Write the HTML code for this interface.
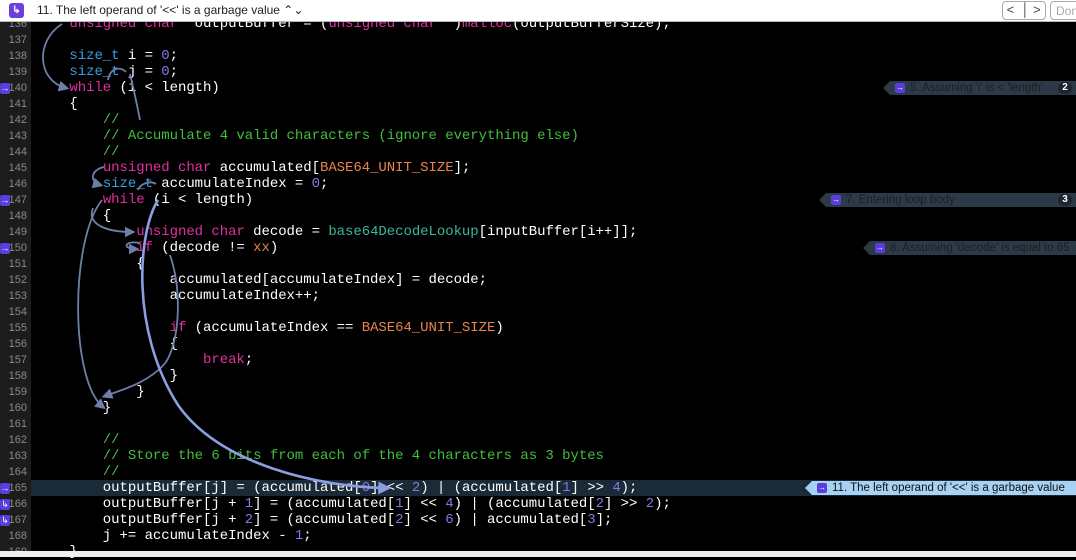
<!DOCTYPE html>
<html><head><meta charset="utf-8"><style>
*{margin:0;padding:0;box-sizing:border-box}
body{width:1076px;height:557px;overflow:hidden;background:#000;position:relative;font-family:"Liberation Sans",sans-serif}
#top{position:absolute;left:0;top:0;width:1076px;height:22px;background:#fff;border-bottom:1px solid #b8b8b8;z-index:5}
#top .ic{position:absolute;left:9px;top:3px;width:15px;height:15px;background:#6b3fd8;border-radius:3px;color:#fff;font-size:10px;line-height:15px;text-align:center;font-weight:bold}
#top .t{position:absolute;left:37px;top:3px;font-size:12px;color:#222}
#top .nav{position:absolute;left:1002px;top:1px;width:44px;height:19px;border:1px solid #aaa;border-radius:4px;font-size:13px;color:#444}
#top .done{position:absolute;left:1050px;top:1px;width:40px;height:19px;border:1px solid #aaa;border-radius:4px;font-size:12px;color:#aaa;padding:2px 0 0 5px}
#gut{position:absolute;left:0;top:22px;width:31px;height:529px;background:#1c1c1c}
#bot{position:absolute;left:0;top:551px;width:1076px;height:6px;background:#efefef;z-index:5}
.ln{position:absolute;left:0;width:27px;text-align:right;font-size:11px;color:#8a8a8a;height:16px;line-height:16px}
.mk{position:absolute;left:0;width:10px;height:11px;background:#5b3ddc;color:#fff;font-size:9px;line-height:11px;text-align:center;border-radius:2px}
.row{position:absolute;left:31px;width:1045px;height:16px}
.c{position:absolute;left:36px;font-family:"Liberation Mono",monospace;font-size:14px;line-height:16px;height:16px;color:#fff;white-space:pre;letter-spacing:-0.05px}
.k{color:#e0309f}.ty{color:#3a9fe0}.n{color:#8b74ea}.m{color:#e8834b}.cm{color:#41bf3c}.f{color:#39b89b}
.bub{position:absolute;height:14px;background:#2c3a47;color:#1a1f25;font-size:11.5px;line-height:14px;padding-left:20px;white-space:nowrap}
.bub:before{content:"";position:absolute;left:-7px;top:0;border-right:7px solid #2c3a47;border-top:7px solid transparent;border-bottom:7px solid transparent}
.bub .a{position:absolute;left:5px;top:2px;width:10px;height:10px;background:#5b3ddc;color:#fff;font-size:8px;line-height:10px;text-align:center;border-radius:2px}
.bub .b{position:absolute;right:4px;top:1px;width:14px;height:12px;background:#1e252c;border-radius:6px;color:#fff;font-weight:bold;text-align:center;line-height:12px;font-size:10px}
.lb{background:#a8d2f4!important;color:#111!important}
.lb:before{border-right-color:#a8d2f4!important}
</style></head><body>
<div id="top"><div class="ic">↳</div><div class="t">11. The left operand of '&lt;&lt;' is a garbage value ⌃⌄</div>
<div class="nav">&nbsp;&lt; &nbsp;│ &gt;</div><div class="done">Don</div></div>
<div id="gut"></div>
<div class="row" style="top:480px;background:#1a2a36"></div>

<div class="c" style="top:16px">    <span class="k">unsigned</span> <span class="k">char</span> *outputBuffer = (<span class="k">unsigned</span> <span class="k">char</span> *)<span class="k">malloc</span>(outputBufferSize);</div>
<div class="c" style="top:48px">    <span class="ty">size_t</span> i = <span class="n">0</span>;</div>
<div class="c" style="top:64px">    <span class="ty">size_t</span> j = <span class="n">0</span>;</div>
<div class="c" style="top:80px">    <span class="k">while</span> (i &lt; length)</div>
<div class="c" style="top:96px">    {</div>
<div class="c cm" style="top:112px">        //</div>
<div class="c cm" style="top:128px">        // Accumulate 4 valid characters (ignore everything else)</div>
<div class="c cm" style="top:144px">        //</div>
<div class="c" style="top:160px">        <span class="k">unsigned</span> <span class="k">char</span> accumulated[<span class="m">BASE64_UNIT_SIZE</span>];</div>
<div class="c" style="top:176px">        <span class="ty">size_t</span> accumulateIndex = <span class="n">0</span>;</div>
<div class="c" style="top:192px">        <span class="k">while</span> (i &lt; length)</div>
<div class="c" style="top:208px">        {</div>
<div class="c" style="top:224px">            <span class="k">unsigned</span> <span class="k">char</span> decode = <span class="f">base64DecodeLookup</span>[inputBuffer[i++]];</div>
<div class="c" style="top:240px">            <span class="k">if</span> (decode != <span class="m">xx</span>)</div>
<div class="c" style="top:256px">            {</div>
<div class="c" style="top:272px">                accumulated[accumulateIndex] = decode;</div>
<div class="c" style="top:288px">                accumulateIndex++;</div>
<div class="c" style="top:320px">                <span class="k">if</span> (accumulateIndex == <span class="m">BASE64_UNIT_SIZE</span>)</div>
<div class="c" style="top:336px">                {</div>
<div class="c" style="top:352px">                    <span class="k">break</span>;</div>
<div class="c" style="top:368px">                }</div>
<div class="c" style="top:384px">            }</div>
<div class="c" style="top:400px">        }</div>
<div class="c cm" style="top:432px">        //</div>
<div class="c cm" style="top:448px">        // Store the 6 bits from each of the 4 characters as 3 bytes</div>
<div class="c cm" style="top:464px">        //</div>
<div class="c" style="top:480px">        outputBuffer[j] = (accumulated[<span class="n">0</span>] &lt;&lt; <span class="n">2</span>) | (accumulated[<span class="n">1</span>] &gt;&gt; <span class="n">4</span>);</div>
<div class="c" style="top:496px">        outputBuffer[j + <span class="n">1</span>] = (accumulated[<span class="n">1</span>] &lt;&lt; <span class="n">4</span>) | (accumulated[<span class="n">2</span>] &gt;&gt; <span class="n">2</span>);</div>
<div class="c" style="top:512px">        outputBuffer[j + <span class="n">2</span>] = (accumulated[<span class="n">2</span>] &lt;&lt; <span class="n">6</span>) | accumulated[<span class="n">3</span>];</div>
<div class="c" style="top:528px">        j += accumulateIndex - <span class="n">1</span>;</div>
<div class="c" style="top:544px">    }</div>

<div class="ln" style="top:16px">136</div><div class="ln" style="top:32px">137</div><div class="ln" style="top:48px">138</div><div class="ln" style="top:64px">139</div><div class="ln" style="top:80px">140</div><div class="ln" style="top:96px">141</div><div class="ln" style="top:112px">142</div><div class="ln" style="top:128px">143</div><div class="ln" style="top:144px">144</div><div class="ln" style="top:160px">145</div><div class="ln" style="top:176px">146</div><div class="ln" style="top:192px">147</div><div class="ln" style="top:208px">148</div><div class="ln" style="top:224px">149</div><div class="ln" style="top:240px">150</div><div class="ln" style="top:256px">151</div><div class="ln" style="top:272px">152</div><div class="ln" style="top:288px">153</div><div class="ln" style="top:304px">154</div><div class="ln" style="top:320px">155</div><div class="ln" style="top:336px">156</div><div class="ln" style="top:352px">157</div><div class="ln" style="top:368px">158</div><div class="ln" style="top:384px">159</div><div class="ln" style="top:400px">160</div><div class="ln" style="top:416px">161</div><div class="ln" style="top:432px">162</div><div class="ln" style="top:448px">163</div><div class="ln" style="top:464px">164</div><div class="ln" style="top:480px">165</div><div class="ln" style="top:496px">166</div><div class="ln" style="top:512px">167</div><div class="ln" style="top:528px">168</div><div class="ln" style="top:544px">169</div>
<div class="mk" style="top:83px">→</div><div class="mk" style="top:195px">→</div><div class="mk" style="top:243px">→</div><div class="mk" style="top:483px">→</div><div class="mk" style="top:499px">↳</div><div class="mk" style="top:515px">↳</div>
<div id="bot"></div>

<div class="bub" style="left:890px;top:81px;width:186px"><span class="a">→</span>5. Assuming 'i' is &lt; 'length'<span class="b">2</span></div>
<div class="bub" style="left:826px;top:193px;width:250px"><span class="a">→</span>7. Entering loop body<span class="b">3</span></div>
<div class="bub" style="left:870px;top:241px;width:206px"><span class="a">→</span>8. Assuming 'decode' is equal to 65</div>
<div class="bub lb" style="left:812px;top:481px;width:264px"><span class="a">→</span>11. The left operand of '&lt;&lt;' is a garbage value</div>

<svg width="1076" height="557" style="position:absolute;left:0;top:0" fill="none">
<defs><marker id="h" markerWidth="6" markerHeight="6" refX="4" refY="3" orient="auto"><path d="M0,0 L6,3 L0,6z" fill="#6e7fa8"/></marker>
<marker id="hb" markerWidth="5" markerHeight="5" refX="3" refY="2.5" orient="auto"><path d="M0,0 L5,2.5 L0,5z" fill="#8a9ee0"/></marker></defs>
<g stroke="#6e7fa8" stroke-width="1.8">
<path d="M62,24 C36,40 36,80 66,88" marker-end="url(#h)"/>
<path d="M108,80 C110,68 120,66 126,72" />
<path d="M130,74 C134,90 138,110 140,120" />
<path d="M104,167 C90,170 90,182 100,185" marker-end="url(#h)"/>
<path d="M138,190 C140,184 150,180 156,184" />
<path d="M102,200 C70,240 70,380 103,407" marker-end="url(#h)"/>
<path d="M93,208 C86,226 110,232 132,232" marker-end="url(#h)"/>
<path d="M140,243 C124,240 122,249 136,249" marker-end="url(#h)"/>
<path d="M170,255 C182,290 180,340 166,362 C150,382 122,390 105,396" marker-end="url(#h)"/>
</g>
<path d="M158,200 C138,232 130,330 178,405 C220,465 320,487 386,488" stroke="#8a9ee0" stroke-width="2.6" marker-end="url(#hb)"/>
</svg>
</body></html>
